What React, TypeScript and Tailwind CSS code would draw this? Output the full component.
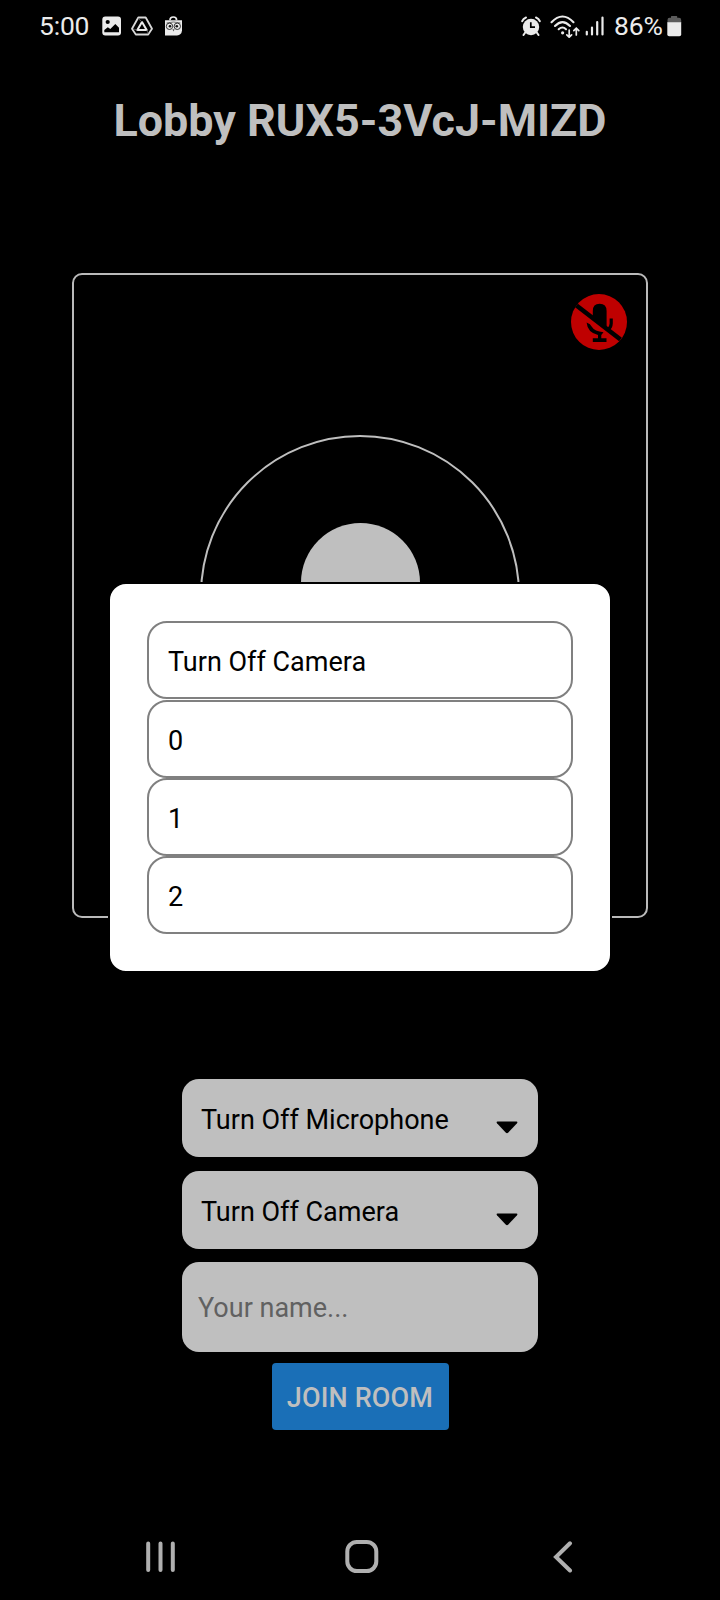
import React from "react";

const cameraOptions = ["Turn Off Camera", "0", "1", "2"];

function StatusBar() {
  return (
    <header className="flex h-[52px] items-center justify-between pr-[38px] pl-[39px] text-[26.5px] leading-none text-[#ebebeb]">
      <div className="flex items-center">
        <span className="w-[63px] pt-px tracking-[-0.2px]">5:00</span>
        <svg className="h-[20px] w-[20px]" viewBox="0 0 20 20">
          <rect x="0.3" y="0.6" width="18.7" height="18.8" rx="3" fill="#ebebeb" />
          <circle cx="5.7" cy="6" r="2.1" fill="#000" />
          <path d="M2.3 16.3V14L5.8 11.3L8.3 13L13.3 8L17 11.7V16.3Z" fill="#000" />
        </svg>
        <svg className="ml-[9px] h-[20px] w-[22px]" viewBox="0 0 22 20" fill="none" stroke="#ebebeb" strokeWidth="1.8" strokeLinejoin="round">
          <path d="M7.3 1.5H14.7L21 12.8L17.2 18.5H4.8L1 12.8Z" stroke="#d8d8d8" />
          <path d="M11 6L15.7 14H6.3Z" stroke="#ebebeb" strokeWidth="2" />
          <path d="M7.3 2.5L11 6M2 13L6.3 14M17.2 17.5L15.7 14" stroke="#777" strokeWidth="0.7" />
        </svg>
        <svg className="ml-[11px] h-[20px] w-[20px]" viewBox="0 0 20 20">
          <path d="M1 4.2H18V14.5Q17.5 19 13 19.5H1Z" fill="#ebebeb" />
          <path d="M6 4.3Q6 1 9.3 1Q12.6 1 12.6 4.3" fill="none" stroke="#ebebeb" strokeWidth="1.7" />
          <path d="M2.5 7Q9.5 5 16.5 7" fill="none" stroke="#555" strokeWidth="0.8" />
          <g fill="none" stroke="#222" strokeWidth="0.9">
            <circle cx="5.5" cy="10.3" r="3.2" />
            <circle cx="13.3" cy="10.3" r="3.2" />
          </g>
          <circle cx="6" cy="10.3" r="1.3" fill="#111" />
          <circle cx="12.8" cy="10.3" r="1.3" fill="#111" />
          <path d="M8.4 13.3H10.6L9.5 15.5Z" fill="#555" />
        </svg>
      </div>
      <div className="flex items-center">
        <svg className="h-[20px] w-[20px]" viewBox="0 0 20 20">
          <circle cx="10" cy="11" r="8.2" fill="#ebebeb" />
          <path d="M1.2 5.2Q2.2 2.5 5 1.5M18.8 5.2Q17.8 2.5 15 1.5M4.2 16.5L2.5 19M15.8 16.5L17.5 19" fill="none" stroke="#ebebeb" strokeWidth="2" strokeLinecap="round" />
          <path d="M9.8 6.2V11.2H14" fill="none" stroke="#000" strokeWidth="1.7" />
        </svg>
        <svg className="ml-[9px] h-[24px] w-[31px]" viewBox="0 0 31 24" fill="none" stroke="#ebebeb" strokeWidth="2.1" strokeLinecap="round">
          <path d="M1.5 8.2Q12.5-3.2 23.5 8.2M5 12Q12.5 4.2 20 12M8.7 15.2Q12.5 11.8 16 15.2" />
          <circle cx="12.6" cy="18.8" r="1.6" fill="#ebebeb" stroke="none" />
          <path d="M19.2 16V23M16.8 20.8L19.2 23.2L21.6 20.8" strokeWidth="1.7" />
          <path d="M26.3 21V14.5M23.8 16.7L26.3 14.2L28.8 16.7" strokeWidth="1.7" />
        </svg>
        <svg className="ml-[4px] h-[20px] w-[20px]" viewBox="0 0 20 20" fill="none" stroke="#ebebeb" strokeWidth="2.2" strokeLinecap="round">
          <path d="M1.8 15.8V18.5M7 11.5V18.5M12.2 6V18.5M17.5 1.5V18.5" />
        </svg>
        <span className="ml-[9px] w-[51px] pt-px tracking-[-0.2px]">86%</span>
        <svg className="ml-[2px] h-[22px] w-[15px]" viewBox="0 0 15 22">
          <path d="M0.5 8V5Q0.5 2.7 2.5 2.7H4V1.5Q4 1 4.6 1H9.6Q10.2 1 10.2 1.5V2.7H12Q14.2 2.7 14.2 5V8Z" fill="#5c5c5c" />
          <path d="M0.3 7.2H14.2V19.3Q14.2 21.2 12.4 21.2H2.1Q0.3 21.2 0.3 19.3Z" fill="#ebebeb" />
        </svg>
      </div>
    </header>
  );
}

function MutedBadge() {
  return (
    <svg className="h-[56px] w-[56px]" viewBox="0 0 56 56">
      <circle cx="28" cy="28" r="28" fill="#bf0000" />
      <path d="M21.8 20.5V17Q21.8 9.8 28.6 9.8Q35.6 9.8 35.6 17V35L19.5 23Q21.8 22.5 21.8 20.5Z" fill="#000" />
      <path d="M40.2 24.5V29.5Q40 33.5 37.2 35.5" fill="none" stroke="#000" strokeWidth="3.2" />
      <path d="M15.6 28.5Q19.5 29.5 21 33Q23.5 37.5 32.5 38.2L30.3 41V44.2H35.5V48H21.8V44.2H27V41Q16.5 38.5 15.6 28.5Z" fill="#000" />
      <path d="M5.5 11.5L49.5 45.5" stroke="#000" strokeWidth="4.6" />
    </svg>
  );
}

function Preview() {
  return (
    <section className="mx-[72px] mt-[111px] flex h-[645px] flex-col items-center rounded-[10px] border-2 border-[#bababa]">
      <div className="flex w-full justify-end pt-[19px] pr-[19px]">
        <MutedBadge />
      </div>
      <div className="mt-[85px] flex h-[321px] w-[320px] justify-center rounded-full border-2 border-[#bfbfbf] pt-[86px]">
        <div className="h-[119px] w-[119px] rounded-full bg-[#bfbfbf]" />
      </div>
    </section>
  );
}

function Dropdown({ label }: { label: string }) {
  return (
    <button className="flex h-[78px] w-[356px] items-center justify-between rounded-[17px] bg-[#bfbfbf] pr-[20px] pl-[19px] text-[27px] text-black">
      <span className="pt-[5px]">{label}</span>
      <svg className="mt-[19px] h-[13px] w-[22px]" viewBox="0 0 22 13">
        <path d="M1.5 0.5H20.5Q22 1 21 2.2L12.3 11.6Q11 13 9.7 11.6L1 2.2Q0 1 1.5 0.5Z" />
      </svg>
    </button>
  );
}

function NavBar() {
  return (
    <nav className="mt-auto flex h-[86px] items-start pl-[145px]">
      <svg className="mt-[26px] h-[33px] w-[31px]" viewBox="0 0 31 33" stroke="#b0b0b0" strokeWidth="4" strokeLinecap="round">
        <path d="M3.2 3.5V30M15.5 3.5V30M27.8 3.5V30" />
      </svg>
      <svg className="mt-[25px] ml-[169px] h-[34px] w-[34px]" viewBox="0 0 34 34">
        <rect x="2.3" y="3" width="29" height="29" rx="9.5" fill="none" stroke="#b0b0b0" strokeWidth="4" />
      </svg>
      <svg className="mt-[26px] ml-[174px] h-[33px] w-[20px]" viewBox="0 0 20 33" fill="none" stroke="#b0b0b0" strokeWidth="4" strokeLinecap="round">
        <path d="M17 3.3L3 17L17 30.5" />
      </svg>
    </nav>
  );
}

export default function App() {
  return (
    <div className="relative flex h-[1600px] w-[720px] flex-col overflow-hidden bg-black font-['Roboto',sans-serif]">
      <StatusBar />
      <h1 className="mt-[43px] text-center text-[44.9px] leading-[52px] font-bold whitespace-nowrap text-[#bfbfbf]">Lobby RUX5-3VcJ-MIZD</h1>
      <div className="h-[15px]" />
      <Preview />
      <form className="mt-[161px] flex flex-col items-center">
        <Dropdown label="Turn Off Microphone" />
        <div className="h-[14px]" />
        <Dropdown label="Turn Off Camera" />
        <input
          className="mt-[13px] h-[90px] w-[356px] rounded-[17px] bg-[#bfbfbf] pt-[2px] pl-[16px] text-[27px] text-[#616161] placeholder:text-[#616161]"
          placeholder="Your name..."
        />
        <button type="button" className="mt-[11px] h-[67px] w-[177px] rounded-[4px] bg-[#1a6fb7] pt-[4px] text-[27px] font-medium tracking-[0.15px] whitespace-nowrap text-[#bfbfbf]">
          JOIN ROOM
        </button>
      </form>
      <NavBar />
      <div className="absolute inset-x-0 top-[582px] flex justify-center">
        <ul className="w-[504px] rounded-[18px] border-2 border-black bg-white px-[37px] pt-[37px] pb-[37px] text-[27px] text-black">
          {cameraOptions.map((option) => (
            <li key={option} className="flex h-[78px] items-center rounded-[20px] border-2 border-[#808080] pt-[5px] pl-[19px] first:mb-px">
              {option}
            </li>
          ))}
        </ul>
      </div>
    </div>
  );
}
